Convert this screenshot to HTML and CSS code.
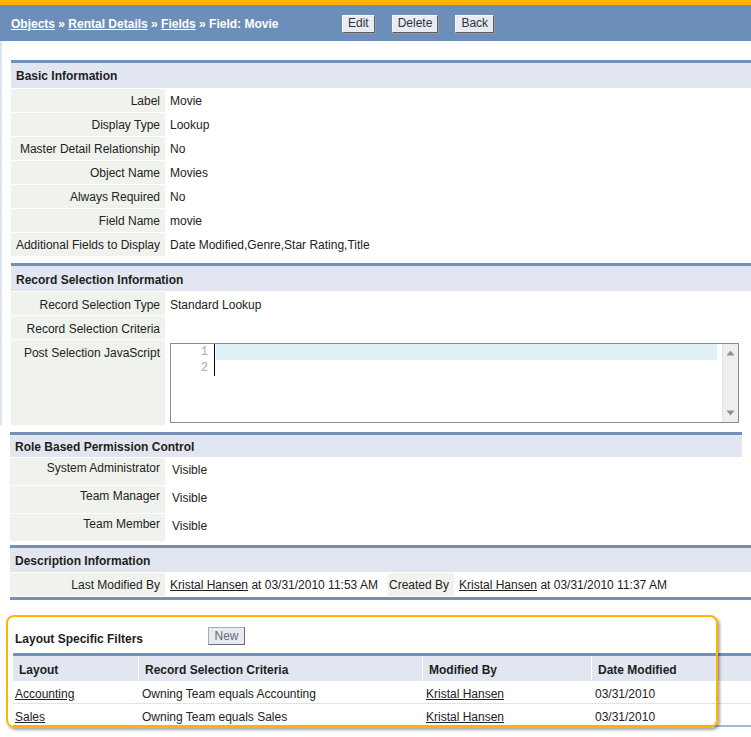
FILE: index.html
```html
<!DOCTYPE html>
<html>
<head>
<meta charset="utf-8">
<link rel="stylesheet" href="styles.css">
</head>
<body>
<div class="topbar"></div>
<header class="titlebar">
  <div class="crumbs"><a href="#">Objects</a> » <a href="#">Rental Details</a> » <a href="#">Fields</a> » Field: Movie</div>
  <div class="actions">
    <button class="btn">Edit</button>
    <button class="btn">Delete</button>
    <button class="btn">Back</button>
  </div>
</header>

<div class="frame">
  <section class="sec sec-basic">
    <div class="sec-head">Basic Information</div>
    <div class="rows">
      <div class="lbl">Label</div><div class="val">Movie</div>
      <div class="lbl">Display Type</div><div class="val">Lookup</div>
      <div class="lbl">Master Detail Relationship</div><div class="val">No</div>
      <div class="lbl">Object Name</div><div class="val">Movies</div>
      <div class="lbl">Always Required</div><div class="val">No</div>
      <div class="lbl">Field Name</div><div class="val">movie</div>
      <div class="lbl">Additional Fields to Display</div><div class="val">Date Modified,Genre,Star Rating,Title</div>
    </div>
  </section>

  <section class="sec sec-record">
    <div class="sec-head">Record Selection Information</div>
    <div class="rows">
      <div class="lbl">Record Selection Type</div><div class="val">Standard Lookup</div>
      <div class="lbl">Record Selection Criteria</div><div class="val"></div>
      <div class="lbl tall">Post Selection JavaScript</div>
      <div class="val tall">
        <div class="editor">
          <div class="gutter"><div class="ln">1</div><div class="ln">2</div></div>
          <div class="code"><div class="active-line"></div></div>
          <div class="scroll">
            <svg width="9" height="6" viewBox="0 0 9 6"><polygon points="4.5,0.5 8.5,5.5 0.5,5.5" fill="#8f8f8f"/></svg>
            <svg width="9" height="6" viewBox="0 0 9 6"><polygon points="0.5,0.5 8.5,0.5 4.5,5.5" fill="#8f8f8f"/></svg>
          </div>
        </div>
      </div>
    </div>
  </section>
</div>

<section class="sec sec-role">
  <div class="sec-head">Role Based Permission Control</div>
  <div class="rows">
    <div class="lbl">System Administrator</div><div class="val">Visible</div>
    <div class="lbl">Team Manager</div><div class="val">Visible</div>
    <div class="lbl">Team Member</div><div class="val">Visible</div>
  </div>
</section>

<section class="sec sec-desc">
  <div class="sec-head">Description Information</div>
  <div class="desc-row">
    <div class="lbl">Last Modified By</div>
    <div class="val"><a href="#">Kristal Hansen</a> at 03/31/2010 11:53 AM</div>
    <div class="lbl">Created By</div>
    <div class="val"><a href="#">Kristal Hansen</a> at 03/31/2010 11:37 AM</div>
  </div>
</section>

<div class="filters">
  <div class="filters-title">
    <div class="ftitle">Layout Specific Filters</div>
    <div><button class="btn btn-new">New</button></div>
  </div>
  <div class="ftable">
    <div class="trow thead">
      <div>Layout</div>
      <div>Record Selection Criteria</div>
      <div>Modified By</div>
      <div>Date Modified</div>
    </div>
    <div class="trow tdata">
      <div><a href="#">Accounting</a></div>
      <div>Owning Team equals Accounting</div>
      <div><a href="#">Kristal Hansen</a></div>
      <div>03/31/2010</div>
    </div>
    <div class="trow tdata last">
      <div><a href="#">Sales</a></div>
      <div>Owning Team equals Sales</div>
      <div><a href="#">Kristal Hansen</a></div>
      <div>03/31/2010</div>
    </div>
  </div>
  <div class="callout"></div>
</div>
</body>
</html>
```

FILE: styles.css
```css
* { box-sizing: border-box; }

html, body {
  margin: 0;
  padding: 0;
  overflow: hidden;
}

body {
  font-family: "Liberation Sans", Arial, sans-serif;
  font-size: 12px;
  color: #222;
  background: #fff;
}

a { color: #222; text-decoration: underline; }

.topbar {
  height: 5px;
  background: #ffb400;
}

.titlebar {
  height: 36px;
  background: #6d8eb9;
  display: grid;
  grid-template-columns: 331px auto;
  align-items: center;
  padding-left: 11px;
}

.crumbs {
  color: #fff;
  font-weight: bold;
  white-space: nowrap;
  padding-top: 1px;
}
.crumbs a { color: #fff; }

.actions {
  display: flex;
  gap: 17px;
  padding-top: 1px;
}

.btn {
  font-family: "Liberation Sans", Arial, sans-serif;
  font-size: 12px;
  color: #333;
  background: #e7ebf4;
  height: 18px;
  line-height: 15px;
  padding: 0 5px;
  margin: 0;
  border: 1px solid;
  border-color: #f6f7fb #5c5c5c #5c5c5c #f6f7fb;
  box-shadow: 1px 1px 0 #9a9a9a;
}

.frame {
  border-left: 2px solid #dce5f0;
  padding-top: 19px;
}

.sec {
  border-top: 3px solid #7290ba;
}

.sec-head {
  height: 25px;
  line-height: 25px;
  padding-left: 5px;
  padding-top: 1px;
  background: #e1e6f0;
  font-weight: bold;
  color: #1e1e1e;
}

.rows {
  display: grid;
  grid-template-columns: 154px 1fr;
  row-gap: 1px;
  padding-top: 1px;
}

.lbl {
  background: #f0f2ed;
  text-align: right;
  padding-right: 5px;
  padding-top: 1px;
  line-height: 23px;
  height: 23px;
  white-space: nowrap;
}

.val {
  padding-left: 5px;
  padding-top: 1px;
  line-height: 23px;
  height: 23px;
  white-space: nowrap;
}

.sec-basic { margin-left: 9px; }

.sec-record {
  margin-left: 9px;
  margin-top: 7px;
}
.sec-record .sec-head { padding-top: 2px; }
.sec-record .lbl, .sec-record .val { padding-top: 2px; }
.sec-record .val.tall { padding-top: 0; }

.lbl.tall, .val.tall { height: 85px; }

.editor {
  margin: 3px 0 0 0;
  width: 569px;
  height: 80px;
  border: 1px solid #8a8a8a;
  display: flex;
  background: #fff;
}

.gutter {
  width: 44px;
  align-self: flex-start;
  border-right: 1px solid #000;
}

.ln {
  height: 16px;
  line-height: 17px;
  text-align: right;
  padding-right: 6px;
  font-family: "Liberation Mono", "Courier New", monospace;
  font-size: 12px;
  color: #aaa;
}

.code {
  flex: 1;
  padding-left: 1px;
}

.active-line {
  width: 501px;
  height: 16px;
  background: #e1f1f8;
}

.scroll {
  width: 16px;
  background: #eeeeee;
  border-left: 1px solid #e6e6e6;
  display: flex;
  flex-direction: column;
  align-items: center;
  justify-content: space-between;
  padding: 6px 0 6px;
}

.sec-role {
  margin: 7px 9px 0 10px;
}
.sec-role .sec-head { height: 22px; line-height: 23px; padding-top: 1px; }
.sec-role .rows { grid-template-columns: 155px 1fr; }
.sec-role .lbl {
  height: 27px;
  line-height: 18px;
  padding-top: 1px;
}
.sec-role .val {
  height: 27px;
  line-height: 18px;
  padding-top: 3px;
  padding-left: 7px;
}

.sec-desc {
  margin: 4px 0 0 10px;
  border-bottom: 3px solid #7290ba;
}
.sec-desc .sec-head { height: 24px; line-height: 24px; }

.desc-row {
  display: grid;
  grid-template-columns: 155px 223px 66px 1fr;
  margin: 1px 0;
}

.filters {
  position: relative;
  margin-top: 15px;
  height: 121px;
}

.filters-title {
  display: grid;
  grid-template-columns: 193px auto;
  padding: 12px 0 0 15px;
  height: 38px;
}

.ftitle {
  font-weight: bold;
  line-height: 18px;
  padding-top: 3px;
  color: #1e1e1e;
}

.btn-new {
  color: #6a6a6a;
  border-color: #a8acb8 #6a6a6a #6a6a6a #a8acb8;
  box-shadow: none;
  padding: 0 5px;
  width: 37px;
}

.ftable {
  margin-left: 13px;
}

.trow {
  display: grid;
  grid-template-columns: 125px 284px 169px 1fr;
}

.thead {
  border-top: 3px solid #7290ba;
  background: #e1e6f0;
  font-weight: bold;
  color: #1e1e1e;
}
.thead > div {
  height: 25px;
  line-height: 25px;
  padding-left: 6px;
  padding-top: 2px;
}
.thead > div + div { border-left: 1px solid #fff; }

.tdata > div {
  height: 23px;
  line-height: 21px;
  padding-top: 3px;
  padding-left: 4px;
  border-bottom: 1px solid #e3e3e3;
  white-space: nowrap;
}
.tdata > div:first-child { padding-left: 2px; }
.tdata.last > div {
  border-bottom: 2px solid #a7b7d0;
  height: 23px;
}

.callout {
  position: absolute;
  left: 6px;
  top: 0;
  width: 712px;
  height: 113px;
  border: 2px solid #ffb400;
  border-radius: 8px;
  box-shadow: 2px 2px 3px rgba(0, 0, 0, 0.35);
  pointer-events: none;
}
```
